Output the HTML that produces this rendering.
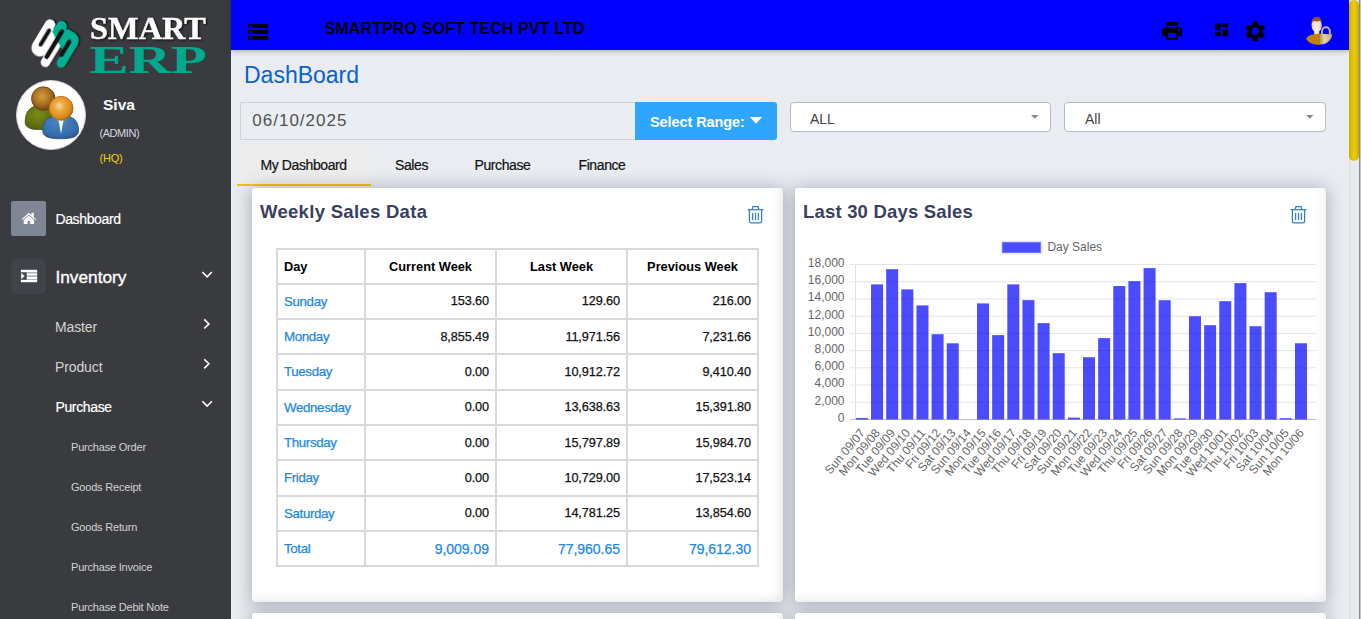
<!DOCTYPE html>
<html lang="en">
<head>
<meta charset="utf-8">
<title>DashBoard</title>
<style>
*{box-sizing:border-box;margin:0;padding:0}
html,body{width:1361px;height:619px;overflow:hidden;background:#e9ecf1;font-family:"Liberation Sans","DejaVu Sans",sans-serif;color:#222}
.abs{position:absolute;white-space:nowrap}
#side{position:absolute;left:0;top:0;width:231px;height:619px;background:#3a3b3f;color:#fff;overflow:hidden}
#top{position:absolute;left:231px;top:0;width:1118px;height:50px;background:#0000fe;box-shadow:0 1px 5px rgba(0,0,0,.3)}
#scroll{position:absolute;left:1349px;top:0;width:12px;height:619px;background:linear-gradient(90deg,#dcdfe4 0,#e6e8ec 2px,#e9ebef 9px,#e3e5e9 10px,#8a8a8a 10px,#8a8a8a 11px,#c4c4c4 11px)}
#thumb{position:absolute;left:0;top:0;width:10px;height:161px;border-radius:5px;background:linear-gradient(90deg,#c7aa00 0,#dfbe04 25%,#eccb0a 50%,#e2c105 75%,#c9ac00 100%)}
.ttl{position:absolute;left:93.5px;top:19.7px;font-weight:bold;font-size:16px;color:#000;white-space:nowrap;letter-spacing:.13px}
.card{position:absolute;background:#fff;border-radius:3px;box-shadow:0 1px 17px 1px rgba(58,64,80,.36),inset -12px -12px 12px -12px rgba(80,90,110,.14)}
/* sidebar */
.nav1{position:absolute;left:55.4px;font-size:14px;color:#fff;white-space:nowrap;letter-spacing:-.35px;-webkit-text-stroke:.2px currentColor}
.nav2{position:absolute;left:55px;font-size:14px;color:#d4d4d4;white-space:nowrap;letter-spacing:-.12px}
.nav3{position:absolute;left:71px;font-size:11px;color:#d2d2d2;white-space:nowrap;letter-spacing:-.2px}
.ibox{position:absolute;left:11px;width:35px;height:35px}
svg{position:absolute;overflow:visible}
.h2{font-size:18.5px;font-weight:bold;color:#3a3f5f;letter-spacing:.3px}
.th{font-size:12.8px;font-weight:bold;color:#000}
.td{font-size:13.3px;color:#111;letter-spacing:-.35px;-webkit-text-stroke:.25px currentColor}
.num{text-align:right;font-size:12.7px;letter-spacing:-.1px}
.tot{font-size:14px;letter-spacing:-.02px}
.blue{color:#1e88e5}
.sel{top:102px;height:29.5px;background:#fff;border:1px solid #b9b9b9;border-radius:4px}
.tab{top:157px;font-size:14px;color:#111;letter-spacing:-.4px;-webkit-text-stroke:.2px currentColor}
</style>
</head>
<body>
<div id="side">
 <!-- LOGO -->
 <svg id="logo" width="231" height="80" style="left:0;top:0">
  <g transform="translate(54.57,43.76) rotate(-59)" style="filter:drop-shadow(1px 1.6px 0.7px rgba(0,0,0,.9))">
   <path fill="#fff" d="M-11,-19 L14.2,-19 A5.25,5.25 0 0 1 14.2,-8.5 L12,-8.5 L12,-1.65 L-11,-1.65 A8.675,8.675 0 0 1 -11,-19 Z"/>
   <path fill="#fff" d="M-20.6,-3 L6,-3 L6,6.6 L-20.6,6.6 A4.8,4.8 0 0 1 -20.6,-3 Z"/>
   <path fill="#00b294" d="M9.1,-8.2 L18.8,-8.2 A5.3,5.3 0 0 1 18.8,2.4 L17.6,2.4 C18.7,3 19.6,4 19.8,5.6 L19.8,11 C19.8,16.5 16,20.4 10.5,20.4 L-13.2,20.4 A4.6,4.6 0 0 1 -13.2,11.2 L9,11.2 L9,10.2 L-1.4,10.2 L3.35,1.65 L5.4,-1.65 Z"/>
   <g stroke="#131315" stroke-width="4" stroke-linecap="round" fill="none">
    <path d="M-15.2,0 L14.2,0" stroke-width="4.6"/>
    <path d="M-7.9,-11.6 L8.6,-11.6"/>
    <path d="M-6,11.6 L9.4,11.6" stroke-width="4.3"/>
   </g>
  </g>
  <text x="90" y="39.2" font-family="'Liberation Serif',serif" font-weight="bold" font-size="32" fill="#fff" stroke="#fff" stroke-width=".45" textLength="116" lengthAdjust="spacingAndGlyphs" style="filter:drop-shadow(1px 1px 1px rgba(0,0,0,.8))">SMART</text>
  <text x="89.5" y="73.3" font-family="'Liberation Serif',serif" font-weight="bold" font-size="39" fill="#00a88e" textLength="117.5" lengthAdjust="spacingAndGlyphs">ERP</text>
 </svg>
 <!-- AVATAR -->
 <div class="abs" style="left:15.5px;top:79.8px;width:70.6px;height:70.6px;border-radius:50%;background:#fff;border:1.5px solid #cfd3da"></div>

 <svg width="71" height="71" style="left:15.5px;top:80px" viewBox="15.5 80 71 71">
  <defs>
   <radialGradient id="gh1" cx=".45" cy=".4" r=".6"><stop offset="0" stop-color="#d59a45"/><stop offset=".6" stop-color="#a8701f"/><stop offset="1" stop-color="#6e4410"/></radialGradient>
   <radialGradient id="gb1" cx=".45" cy=".35" r=".75"><stop offset="0" stop-color="#7a8a18"/><stop offset=".7" stop-color="#5d6d0d"/><stop offset="1" stop-color="#46540a"/></radialGradient>
   <radialGradient id="gh2" cx=".42" cy=".4" r=".62"><stop offset="0" stop-color="#fbd9a0"/><stop offset=".35" stop-color="#eea73c"/><stop offset=".8" stop-color="#d98a1c"/><stop offset="1" stop-color="#a8650f"/></radialGradient>
   <radialGradient id="gb2" cx=".45" cy=".3" r=".8"><stop offset="0" stop-color="#4a86c6"/><stop offset=".7" stop-color="#356cab"/><stop offset="1" stop-color="#25528a"/></radialGradient>
  </defs>
  <path fill="url(#gb1)" stroke="#3f4c08" stroke-width=".8" d="M24.7,122 C24.7,110 31,105.7 39,105.7 C47,105.7 53.5,110 53.5,122 C53.5,127.5 48,129.6 39,129.6 C30,129.6 24.7,127.5 24.7,122 Z"/>
  <circle cx="42.8" cy="98.6" r="11.8" fill="url(#gh1)" stroke="#6a400c" stroke-width=".8"/>
  <path fill="url(#gb2)" stroke="#1f4a80" stroke-width=".8" d="M42.2,130.5 C42.2,119 49,115.4 60,115.4 C71,115.4 78.1,119 78.1,130.5 C78.1,136.5 72,138.8 60,138.8 C48,138.8 42.2,136.5 42.2,130.5 Z"/>
  <path fill="#fff" d="M57.6,117.5 L63.4,117.5 L60.5,134 Z"/>
  <path fill="#7fa6d6" d="M54.5,116.6 L57.6,117.5 L58.6,123.5 Z M66.5,116.6 L63.4,117.5 L62.4,123.5 Z"/>
  <circle cx="60.6" cy="108.3" r="12" fill="url(#gh2)" stroke="#b06c10" stroke-width=".8"/>
 </svg>
 <div class="abs" style="left:103px;top:96px;font-weight:bold;font-size:15.5px;color:#fff">Siva</div>
 <div class="abs" style="left:99.5px;top:127px;font-size:11px;color:#d6d6e2;letter-spacing:-.45px">(ADMIN)</div>
 <div class="abs" style="left:99.5px;top:152px;font-size:11px;color:#f2d20a;letter-spacing:-.2px">(HQ)</div>
 <!-- NAV -->
 <div class="ibox" style="top:201px;background:#7f8796;border-radius:2px"></div>

 <svg width="35" height="35" style="left:11px;top:201px" viewBox="11 201 35 35">
  <path fill="#fff" d="M28.8,212.7 L31.5,215.1 L31.5,212.7 L33.8,212.7 L33.8,217.2 L36,219.2 L35.2,220.1 L28.8,214.5 L22.4,220.1 L21.6,219.2 Z"/>
  <path fill="#fff" d="M28.8,215.4 L34,219.9 L34,224.1 L30.1,224.1 L30.1,221 L27.6,221 L27.6,224.1 L23.7,224.1 L23.7,219.9 Z"/>
 </svg>
 <div class="nav1" style="top:211px">Dashboard</div>
 <div class="ibox" style="top:259px;background:#40434a;border-radius:5px"></div>

 <svg width="35" height="35" style="left:11px;top:259px" viewBox="11 259 35 35">
  <g fill="#fff">
   <rect x="20.9" y="269.8" width="16.3" height="2.5"/>
   <rect x="26.7" y="273.2" width="10.5" height="2.5"/>
   <rect x="26.7" y="276.5" width="10.5" height="2.5"/>
   <rect x="20.9" y="279.8" width="16.3" height="2.4"/>
   <path d="M21.2,272.9 L24.8,276.1 L21.2,279.3 Z"/>
  </g>
  <g fill="#c9cbd0"><rect x="26.7" y="272.3" width="10.5" height=".9"/><rect x="26.7" y="275.7" width="10.5" height=".8"/><rect x="26.7" y="279" width="10.5" height=".8"/></g>
 </svg>
 <div class="abs" style="left:55.4px;top:267px;font-size:17.3px;color:#fff;-webkit-text-stroke:.35px #fff">Inventory</div>
 <div class="nav2" style="top:319px">Master</div>
 <div class="nav2" style="top:359px">Product</div>
 <div class="nav1" style="top:399px">Purchase</div>
 <div class="nav3" style="top:440.5px">Purchase Order</div>
 <div class="nav3" style="top:480.5px">Goods Receipt</div>
 <div class="nav3" style="top:520.5px">Goods Return</div>
 <div class="nav3" style="top:560.5px">Purchase Invoice</div>
 <div class="nav3" style="top:600.5px">Purchase Debit Note</div>

 <svg width="231" height="619" style="left:0;top:0;pointer-events:none" fill="none" stroke="#fff" stroke-width="1.6" stroke-linecap="square">
  <path d="M202.9,272.6 L207.1,276.8 L211.3,272.6"/>
  <path d="M204.8,319.9 L208.9,323.9 L204.8,327.9"/>
  <path d="M204.8,359.8 L208.9,363.8 L204.8,367.8"/>
  <path d="M202.9,401.8 L207.1,406 L211.3,401.8"/>
 </svg>
</div>
<div id="top">

 <svg width="20" height="16" style="left:17px;top:24px"><g fill="#000"><rect x="0" y="0" width="20" height="4"/><rect x="0" y="6" width="20" height="4"/><rect x="0" y="12" width="20" height="4"/></g><g fill="#0000fe"><rect x="2" y="1" width="2" height="2"/><rect x="2" y="7" width="2" height="2"/><rect x="2" y="13" width="2" height="2"/></g></svg>
 <svg width="24" height="24" viewBox="0 0 24 24" style="left:929px;top:19px"><path fill="#000" d="M19 8H5c-1.660 0-3 1.340-3 3v6h4v4h12v-4h4v-6c0-1.660-1.340-3-3-3zm-3 11H8v-5h8v5zm3-7c-.55 0-1-.45-1-1s.45-1 1-1 1 .45 1 1-.45 1-1 1zm-1-9H6v4h12V3z"/></svg>
 <svg width="17.3" height="17.3" viewBox="0 0 24 24" style="left:981.9px;top:21px"><path fill="#000" d="M3 13h8V3H3v10zm0 8h8v-6H3v6zm10 0h8V11h-8v10zm0-18v6h8V3h-8z"/></svg>
 <svg width="24.6" height="24.6" viewBox="0 0 24 24" style="left:1011.7px;top:18.7px"><path fill="#000" d="M19.14 12.94c.04-.3.06-.61.06-.94 0-.32-.02-.64-.07-.94l2.030-1.580c.18-.14.23-.41.12-.61l-1.920-3.320c-.12-.22-.37-.29-.59-.22l-2.390.96c-.5-.38-1.030-.7-1.620-.94l-.36-2.540c-.04-.24-.24-.41-.48-.41h-3.840c-.24 0-.43.17-.47.41l-.36 2.540c-.59.24-1.130.57-1.620.94l-2.390-.96c-.22-.08-.47 0-.59.22L2.740 8.870c-.12.21-.08.47.12.61l2.030 1.580c-.05.3-.09.63-.09.94s.02.64.07.94l-2.030 1.580c-.18.14-.23.41-.12.61l1.920 3.320c.12.22.37.29.59.22l2.390-.96c.5.38 1.030.7 1.620.94l.36 2.540c.05.24.24.41.48.41h3.840c.24 0 .44-.17.47-.41l.36-2.540c.59-.24 1.130-.56 1.620-.94l2.390.96c.22.08.47 0 .59-.22l1.920-3.320c.12-.22.07-.47-.12-.61l-2.010-1.580zM12 15.600c-1.980 0-3.600-1.620-3.600-3.600s1.620-3.600 3.600-3.600 3.600 1.620 3.600 3.600-1.620 3.600-3.600 3.600z"/></svg>
 <svg width="34" height="34" viewBox="1302 14 34 34" style="left:1071px;top:14px">
  <defs>
   <linearGradient id="lk" x1="0" x2="1"><stop offset="0" stop-color="#b39a55"/><stop offset=".35" stop-color="#e6d59a"/><stop offset=".7" stop-color="#d2bb78"/><stop offset="1" stop-color="#bfa45a"/></linearGradient>
   <linearGradient id="fc" x1="0" x2="1"><stop offset="0" stop-color="#f1dcc6"/><stop offset=".5" stop-color="#fbeee0"/><stop offset="1" stop-color="#e9cfb4"/></linearGradient>
   <clipPath id="bowl"><path d="M1306.2,38.2 C1307.6,35.8 1311.5,34.4 1316.2,33.7 L1320,33.7 L1332.3,34.4 C1331.4,40.5 1326,44.7 1319,44.7 C1312,44.7 1307.4,42.4 1306.2,38.2 Z"/></clipPath>
  </defs>
  <g style="filter:blur(.35px)">
   <path fill="none" stroke="#b9b0a6" stroke-width="2" d="M1322,35 L1322,31.3 A3.9,4 0 0 1 1329.8,31.3 L1329.8,35"/>
   <path fill="url(#fc)" d="M1311.6,25.5 C1311.6,21 1313.6,19.5 1316.6,19.5 C1319.7,19.500 1321.7,21 1321.7,25.5 C1321.7,28.5 1320.3,30.5 1319.2,31.5 L1319.2,34.5 L1314.2,34.5 L1314.2,31.5 C1313,30.5 1311.6,28.5 1311.6,25.5 Z"/>
   <path fill="#9a5524" d="M1311.700,24 C1311.200,19 1313.600,17 1316.600,17 C1319.800,17 1322.200,19 1321.600,24 C1321.300,22 1320.500,21.200 1319.500,21 C1317.500,21.800 1315,21.200 1313.600,21.200 C1312.600,21.800 1312,22.800 1311.700,24 Z"/>
   <g clip-path="url(#bowl)"><rect x="1305" y="33" width="15" height="13" fill="#c47f08"/><rect x="1320" y="33" width="13" height="13" fill="url(#lk)"/></g>
  </g>
 </svg>
 <div class="ttl">SMARTPRO SOFT TECH PVT LTD</div>
</div>
<div id="main">
 <div class="abs" style="left:244px;top:62px;font-size:23px;color:#0a62cc">DashBoard</div>

 <div class="abs" style="left:240px;top:102px;width:396px;height:38px;border:1px solid #cdd3dd;background:#eaedf2"></div>
 <div class="abs" style="left:252.3px;top:111px;font-size:17px;letter-spacing:1px;color:#505050">06/10/2025</div>
 <div class="abs" style="left:635px;top:102px;width:142px;height:38px;background:#2ea6ff;border-radius:0 3px 3px 0"></div>
 <div class="abs" style="left:650px;top:114px;font-size:14.5px;font-weight:bold;color:#fff;letter-spacing:-.08px">Select Range:</div>
 <svg width="12" height="7" style="left:750px;top:117.200px"><path fill="#fff" d="M0,0 L12,0 L6,6.700 Z"/></svg>
 <div class="abs sel" style="left:790px;width:261px"></div>
 <div class="abs" style="left:810px;top:111px;font-size:14px;color:#444">ALL</div>
 <svg width="8" height="4" style="left:1031px;top:115px"><path fill="#888" d="M0,0 L7.500,0 L3.750,3.800 Z"/></svg>
 <div class="abs sel" style="left:1064px;width:262px"></div>
 <div class="abs" style="left:1085px;top:111px;font-size:14px;color:#444">All</div>
 <svg width="8" height="4" style="left:1306px;top:115px"><path fill="#888" d="M0,0 L7.500,0 L3.750,3.800 Z"/></svg>
 <div class="abs" style="left:237px;top:144px;width:134px;height:42px;background:#ededed;border-bottom:2px solid #efc800"></div>
 <div class="abs tab" style="left:260.500px">My Dashboard</div>
 <div class="abs tab" style="left:395px">Sales</div>
 <div class="abs tab" style="left:474.500px">Purchase</div>
 <div class="abs tab" style="left:578.500px">Finance</div>
 <div class="card" id="c1" style="left:252px;top:188px;width:531px;height:414px"></div>
 <div class="card" id="c2" style="left:795px;top:188px;width:531px;height:414px"></div>
<div class="abs h2" style="left:260px;top:201px">Weekly Sales Data</div>
<svg width="18" height="19" viewBox="746 205 18 19" style="left:746px;top:205px" fill="none" stroke="#2f7fc9" stroke-width="1.25"><path d="M747.6,209.700 L763.4,209.700"/><path d="M752.200,209.500 L752.900,206.700 L758.100,206.700 L758.800,209.500"/><path d="M749.400,209.700 L749.400,221.200 Q749.400,222.900 751.100,222.900 L759.900,222.900 Q761.600,222.900 761.600,221.200 L761.600,209.700"/><path d="M752.600,213 L752.600,220 M755.500,213 L755.500,220 M758.400,213 L758.400,220"/></svg>
<div class="abs" style="left:276px;top:248.30px;width:483px;height:319.20px;background:#d9d9d9"></div>
<div class="abs" style="left:278px;top:250.30px;width:86px;height:32.40px;background:#fff"></div>
<div class="abs" style="left:366px;top:250.30px;width:129px;height:32.40px;background:#fff"></div>
<div class="abs" style="left:497px;top:250.30px;width:129px;height:32.40px;background:#fff"></div>
<div class="abs" style="left:628px;top:250.30px;width:129px;height:32.40px;background:#fff"></div>
<div class="abs" style="left:278px;top:284.70px;width:86px;height:33.35px;background:#fff"></div>
<div class="abs" style="left:366px;top:284.70px;width:129px;height:33.35px;background:#fff"></div>
<div class="abs" style="left:497px;top:284.70px;width:129px;height:33.35px;background:#fff"></div>
<div class="abs" style="left:628px;top:284.70px;width:129px;height:33.35px;background:#fff"></div>
<div class="abs" style="left:278px;top:320.05px;width:86px;height:33.35px;background:#fff"></div>
<div class="abs" style="left:366px;top:320.05px;width:129px;height:33.35px;background:#fff"></div>
<div class="abs" style="left:497px;top:320.05px;width:129px;height:33.35px;background:#fff"></div>
<div class="abs" style="left:628px;top:320.05px;width:129px;height:33.35px;background:#fff"></div>
<div class="abs" style="left:278px;top:355.40px;width:86px;height:33.35px;background:#fff"></div>
<div class="abs" style="left:366px;top:355.40px;width:129px;height:33.35px;background:#fff"></div>
<div class="abs" style="left:497px;top:355.40px;width:129px;height:33.35px;background:#fff"></div>
<div class="abs" style="left:628px;top:355.40px;width:129px;height:33.35px;background:#fff"></div>
<div class="abs" style="left:278px;top:390.75px;width:86px;height:33.35px;background:#fff"></div>
<div class="abs" style="left:366px;top:390.75px;width:129px;height:33.35px;background:#fff"></div>
<div class="abs" style="left:497px;top:390.75px;width:129px;height:33.35px;background:#fff"></div>
<div class="abs" style="left:628px;top:390.75px;width:129px;height:33.35px;background:#fff"></div>
<div class="abs" style="left:278px;top:426.10px;width:86px;height:33.35px;background:#fff"></div>
<div class="abs" style="left:366px;top:426.10px;width:129px;height:33.35px;background:#fff"></div>
<div class="abs" style="left:497px;top:426.10px;width:129px;height:33.35px;background:#fff"></div>
<div class="abs" style="left:628px;top:426.10px;width:129px;height:33.35px;background:#fff"></div>
<div class="abs" style="left:278px;top:461.45px;width:86px;height:33.35px;background:#fff"></div>
<div class="abs" style="left:366px;top:461.45px;width:129px;height:33.35px;background:#fff"></div>
<div class="abs" style="left:497px;top:461.45px;width:129px;height:33.35px;background:#fff"></div>
<div class="abs" style="left:628px;top:461.45px;width:129px;height:33.35px;background:#fff"></div>
<div class="abs" style="left:278px;top:496.80px;width:86px;height:33.35px;background:#fff"></div>
<div class="abs" style="left:366px;top:496.80px;width:129px;height:33.35px;background:#fff"></div>
<div class="abs" style="left:497px;top:496.80px;width:129px;height:33.35px;background:#fff"></div>
<div class="abs" style="left:628px;top:496.80px;width:129px;height:33.35px;background:#fff"></div>
<div class="abs" style="left:278px;top:532.15px;width:86px;height:33.35px;background:#fff"></div>
<div class="abs" style="left:366px;top:532.15px;width:129px;height:33.35px;background:#fff"></div>
<div class="abs" style="left:497px;top:532.15px;width:129px;height:33.35px;background:#fff"></div>
<div class="abs" style="left:628px;top:532.15px;width:129px;height:33.35px;background:#fff"></div>
<div class="abs th" style="left:284px;top:259.22px">Day</div>
<div class="abs th" style="left:366px;width:129px;text-align:center;top:259.22px">Current Week</div>
<div class="abs th" style="left:497px;width:129px;text-align:center;top:259.22px">Last Week</div>
<div class="abs th" style="left:628px;width:129px;text-align:center;top:259.22px">Previous Week</div>
<div class="abs td blue" style="left:284px;top:293.71px">Sunday</div>
<div class="abs td num" style="left:366px;width:123px;top:294.26px">153.60</div>
<div class="abs td num" style="left:497px;width:123px;top:294.26px">129.60</div>
<div class="abs td num" style="left:628px;width:123px;top:294.26px">216.00</div>
<div class="abs td blue" style="left:284px;top:329.06px">Monday</div>
<div class="abs td num" style="left:366px;width:123px;top:329.61px">8,855.49</div>
<div class="abs td num" style="left:497px;width:123px;top:329.61px">11,971.56</div>
<div class="abs td num" style="left:628px;width:123px;top:329.61px">7,231.66</div>
<div class="abs td blue" style="left:284px;top:364.41px">Tuesday</div>
<div class="abs td num" style="left:366px;width:123px;top:364.96px">0.00</div>
<div class="abs td num" style="left:497px;width:123px;top:364.96px">10,912.72</div>
<div class="abs td num" style="left:628px;width:123px;top:364.96px">9,410.40</div>
<div class="abs td blue" style="left:284px;top:399.76px">Wednesday</div>
<div class="abs td num" style="left:366px;width:123px;top:400.31px">0.00</div>
<div class="abs td num" style="left:497px;width:123px;top:400.31px">13,638.63</div>
<div class="abs td num" style="left:628px;width:123px;top:400.31px">15,391.80</div>
<div class="abs td blue" style="left:284px;top:435.11px">Thursday</div>
<div class="abs td num" style="left:366px;width:123px;top:435.66px">0.00</div>
<div class="abs td num" style="left:497px;width:123px;top:435.66px">15,797.89</div>
<div class="abs td num" style="left:628px;width:123px;top:435.66px">15,984.70</div>
<div class="abs td blue" style="left:284px;top:470.46px">Friday</div>
<div class="abs td num" style="left:366px;width:123px;top:471.01px">0.00</div>
<div class="abs td num" style="left:497px;width:123px;top:471.01px">10,729.00</div>
<div class="abs td num" style="left:628px;width:123px;top:471.01px">17,523.14</div>
<div class="abs td blue" style="left:284px;top:505.81px">Saturday</div>
<div class="abs td num" style="left:366px;width:123px;top:506.36px">0.00</div>
<div class="abs td num" style="left:497px;width:123px;top:506.36px">14,781.25</div>
<div class="abs td num" style="left:628px;width:123px;top:506.36px">13,854.60</div>
<div class="abs td blue" style="left:284px;top:541.16px">Total</div>
<div class="abs td num blue tot" style="left:366px;width:123px;top:540.53px">9,009.09</div>
<div class="abs td num blue tot" style="left:497px;width:123px;top:540.53px">77,960.65</div>
<div class="abs td num blue tot" style="left:628px;width:123px;top:540.53px">79,612.30</div>
<div class="abs h2" style="left:803px;top:201px;letter-spacing:.19px">Last 30 Days Sales</div>
<svg width="18" height="19" viewBox="746 205 18 19" style="left:1289px;top:205px" fill="none" stroke="#2f7fc9" stroke-width="1.25"><path d="M747.6,209.700 L763.4,209.700"/><path d="M752.200,209.500 L752.900,206.700 L758.100,206.700 L758.800,209.500"/><path d="M749.400,209.700 L749.400,221.200 Q749.400,222.900 751.100,222.900 L759.900,222.900 Q761.600,222.900 761.600,221.200 L761.600,209.700"/><path d="M752.600,213 L752.600,220 M755.500,213 L755.500,220 M758.400,213 L758.400,220"/></svg>
<svg width="531" height="300" viewBox="795 230 531 300" style="left:795px;top:230px" font-family="'Liberation Sans',sans-serif" font-size="12" fill="#666">
<rect x="1001.5" y="241.5" width="40" height="12" fill="#4c4cff" stroke="#e4e4f4" stroke-width="1.5"/>
<text x="1047.4" y="250.8">Day Sales</text>
<rect x="850" y="419.00" width="466" height="1" fill="#bdbdbd"/>
<text x="844.5" y="421.90" text-anchor="end">0</text>
<rect x="850" y="401.78" width="466" height="1" fill="#e5e5e5"/>
<text x="844.5" y="404.68" text-anchor="end">2,000</text>
<rect x="850" y="384.56" width="466" height="1" fill="#e5e5e5"/>
<text x="844.5" y="387.46" text-anchor="end">4,000</text>
<rect x="850" y="367.33" width="466" height="1" fill="#e5e5e5"/>
<text x="844.5" y="370.23" text-anchor="end">6,000</text>
<rect x="850" y="350.11" width="466" height="1" fill="#e5e5e5"/>
<text x="844.5" y="353.01" text-anchor="end">8,000</text>
<rect x="850" y="332.89" width="466" height="1" fill="#e5e5e5"/>
<text x="844.5" y="335.79" text-anchor="end">10,000</text>
<rect x="850" y="315.67" width="466" height="1" fill="#e5e5e5"/>
<text x="844.5" y="318.57" text-anchor="end">12,000</text>
<rect x="850" y="298.44" width="466" height="1" fill="#e5e5e5"/>
<text x="844.5" y="301.34" text-anchor="end">14,000</text>
<rect x="850" y="281.22" width="466" height="1" fill="#e5e5e5"/>
<text x="844.5" y="284.12" text-anchor="end">16,000</text>
<rect x="850" y="264.00" width="466" height="1" fill="#e5e5e5"/>
<text x="844.5" y="266.90" text-anchor="end">18,000</text>
<rect x="855" y="264" width="1" height="156" fill="#e0e0e0"/>
<rect x="855.90" y="418.04" width="12" height="1.46" fill="rgba(0,0,255,.7)"/>
<text transform="translate(862.3,430.5) rotate(-50)" text-anchor="end" y="4.2">Sun 09/07</text>
<rect x="871.04" y="284.40" width="12" height="135.10" fill="rgba(0,0,255,.7)"/>
<text transform="translate(877.4,430.5) rotate(-50)" text-anchor="end" y="4.2">Mon 09/08</text>
<rect x="886.18" y="269.20" width="12" height="150.30" fill="rgba(0,0,255,.7)"/>
<text transform="translate(892.6,430.5) rotate(-50)" text-anchor="end" y="4.2">Tue 09/09</text>
<rect x="901.32" y="289.40" width="12" height="130.10" fill="rgba(0,0,255,.7)"/>
<text transform="translate(907.7,430.5) rotate(-50)" text-anchor="end" y="4.2">Wed 09/10</text>
<rect x="916.46" y="305.40" width="12" height="114.10" fill="rgba(0,0,255,.7)"/>
<text transform="translate(922.9,430.5) rotate(-50)" text-anchor="end" y="4.2">Thu 09/11</text>
<rect x="931.60" y="334.20" width="12" height="85.30" fill="rgba(0,0,255,.7)"/>
<text transform="translate(938.0,430.5) rotate(-50)" text-anchor="end" y="4.2">Fri 09/12</text>
<rect x="946.74" y="343.30" width="12" height="76.20" fill="rgba(0,0,255,.7)"/>
<text transform="translate(953.1,430.5) rotate(-50)" text-anchor="end" y="4.2">Sat 09/13</text>
<text transform="translate(968.3,430.5) rotate(-50)" text-anchor="end" y="4.2">Sun 09/14</text>
<rect x="977.02" y="303.40" width="12" height="116.10" fill="rgba(0,0,255,.7)"/>
<text transform="translate(983.4,430.5) rotate(-50)" text-anchor="end" y="4.2">Mon 09/15</text>
<rect x="992.16" y="335.10" width="12" height="84.40" fill="rgba(0,0,255,.7)"/>
<text transform="translate(998.6,430.5) rotate(-50)" text-anchor="end" y="4.2">Tue 09/16</text>
<rect x="1007.30" y="284.40" width="12" height="135.10" fill="rgba(0,0,255,.7)"/>
<text transform="translate(1013.7,430.5) rotate(-50)" text-anchor="end" y="4.2">Wed 09/17</text>
<rect x="1022.44" y="300.10" width="12" height="119.40" fill="rgba(0,0,255,.7)"/>
<text transform="translate(1028.8,430.5) rotate(-50)" text-anchor="end" y="4.2">Thu 09/18</text>
<rect x="1037.58" y="323.10" width="12" height="96.40" fill="rgba(0,0,255,.7)"/>
<text transform="translate(1044.0,430.5) rotate(-50)" text-anchor="end" y="4.2">Fri 09/19</text>
<rect x="1052.72" y="353.20" width="12" height="66.30" fill="rgba(0,0,255,.7)"/>
<text transform="translate(1059.1,430.5) rotate(-50)" text-anchor="end" y="4.2">Sat 09/20</text>
<rect x="1067.86" y="417.64" width="12" height="1.86" fill="rgba(0,0,255,.7)"/>
<text transform="translate(1074.3,430.5) rotate(-50)" text-anchor="end" y="4.2">Sun 09/21</text>
<rect x="1083.00" y="357.23" width="12" height="62.27" fill="rgba(0,0,255,.7)"/>
<text transform="translate(1089.4,430.5) rotate(-50)" text-anchor="end" y="4.2">Mon 09/22</text>
<rect x="1098.14" y="338.12" width="12" height="81.38" fill="rgba(0,0,255,.7)"/>
<text transform="translate(1104.5,430.5) rotate(-50)" text-anchor="end" y="4.2">Tue 09/23</text>
<rect x="1113.28" y="286.06" width="12" height="133.44" fill="rgba(0,0,255,.7)"/>
<text transform="translate(1119.7,430.5) rotate(-50)" text-anchor="end" y="4.2">Wed 09/24</text>
<rect x="1128.42" y="281.15" width="12" height="138.35" fill="rgba(0,0,255,.7)"/>
<text transform="translate(1134.8,430.5) rotate(-50)" text-anchor="end" y="4.2">Thu 09/25</text>
<rect x="1143.56" y="268.11" width="12" height="151.39" fill="rgba(0,0,255,.7)"/>
<text transform="translate(1150.0,430.5) rotate(-50)" text-anchor="end" y="4.2">Fri 09/26</text>
<rect x="1158.70" y="300.20" width="12" height="119.30" fill="rgba(0,0,255,.7)"/>
<text transform="translate(1165.1,430.5) rotate(-50)" text-anchor="end" y="4.2">Sat 09/27</text>
<rect x="1173.84" y="418.38" width="12" height="1.12" fill="rgba(0,0,255,.7)"/>
<text transform="translate(1180.2,430.5) rotate(-50)" text-anchor="end" y="4.2">Sun 09/28</text>
<rect x="1188.98" y="316.21" width="12" height="103.29" fill="rgba(0,0,255,.7)"/>
<text transform="translate(1195.4,430.5) rotate(-50)" text-anchor="end" y="4.2">Mon 09/29</text>
<rect x="1204.12" y="325.18" width="12" height="94.32" fill="rgba(0,0,255,.7)"/>
<text transform="translate(1210.5,430.5) rotate(-50)" text-anchor="end" y="4.2">Tue 09/30</text>
<rect x="1219.26" y="301.16" width="12" height="118.34" fill="rgba(0,0,255,.7)"/>
<text transform="translate(1225.7,430.5) rotate(-50)" text-anchor="end" y="4.2">Wed 10/01</text>
<rect x="1234.40" y="283.11" width="12" height="136.39" fill="rgba(0,0,255,.7)"/>
<text transform="translate(1240.8,430.5) rotate(-50)" text-anchor="end" y="4.2">Thu 10/02</text>
<rect x="1249.54" y="326.21" width="12" height="93.29" fill="rgba(0,0,255,.7)"/>
<text transform="translate(1255.9,430.5) rotate(-50)" text-anchor="end" y="4.2">Fri 10/03</text>
<rect x="1264.68" y="292.22" width="12" height="127.28" fill="rgba(0,0,255,.7)"/>
<text transform="translate(1271.1,430.5) rotate(-50)" text-anchor="end" y="4.2">Sat 10/04</text>
<rect x="1279.82" y="418.18" width="12" height="1.32" fill="rgba(0,0,255,.7)"/>
<text transform="translate(1286.2,430.5) rotate(-50)" text-anchor="end" y="4.2">Sun 10/05</text>
<rect x="1294.96" y="343.24" width="12" height="76.26" fill="rgba(0,0,255,.7)"/>
<text transform="translate(1301.4,430.5) rotate(-50)" text-anchor="end" y="4.2">Mon 10/06</text>
</svg>
 <div class="card" id="c3" style="left:252px;top:613px;width:531px;height:40px"></div>
 <div class="card" id="c4" style="left:795px;top:613px;width:531px;height:40px"></div>
</div>
<div id="scroll"><div id="thumb"></div></div>
</body>
</html>
